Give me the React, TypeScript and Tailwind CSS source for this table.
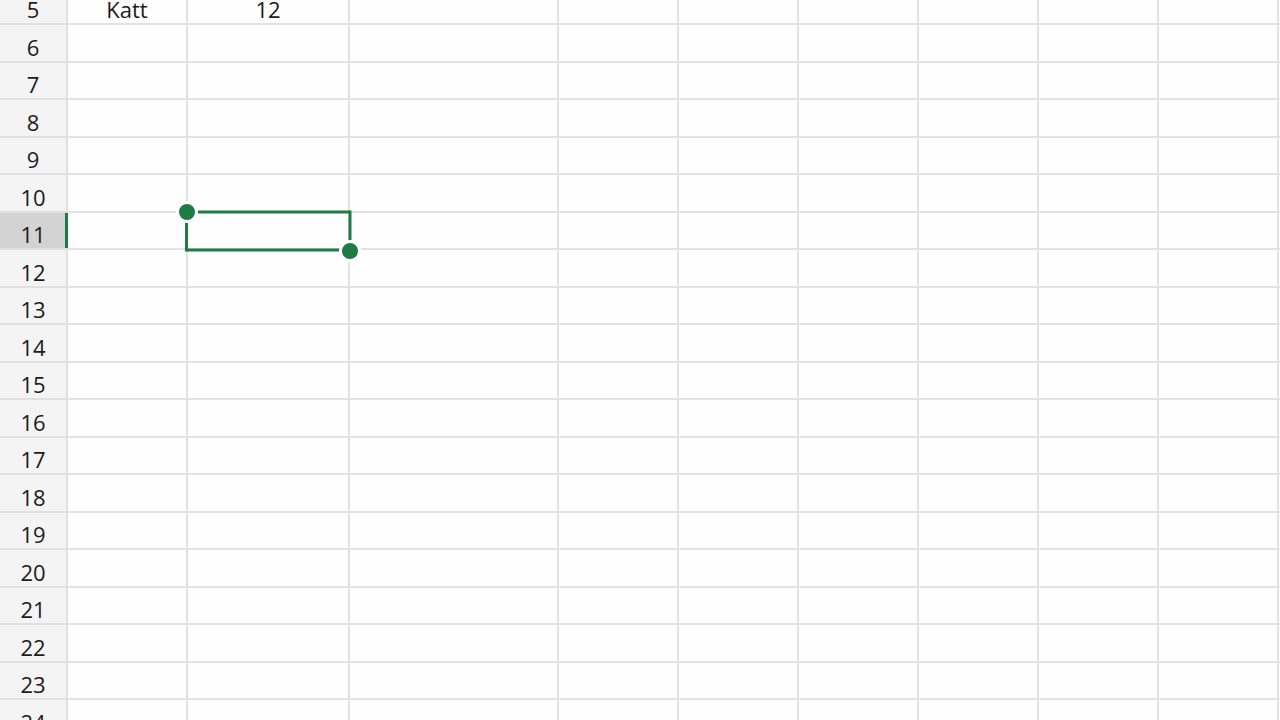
import React from "react";

const rows = Array.from({ length: 20 }, (_, i) => i + 5);
const colWidths = [120, 162, 209, 120, 120, 120, 120, 120, 120, 120];

export default function App() {
  return (
    <div
      className="relative h-[720px] w-[1280px] overflow-hidden bg-[#fefefe] text-[#1c1c1c]"
      style={{ fontFamily: '"Open Sans", "Noto Sans", sans-serif' }}
    >
      <div className="-mt-[12.5px] flex flex-col">
        {rows.map((r) => {
          const sel = r === 11;
          return (
            <div key={r} className="flex h-[37.5px] shrink-0">
              <div
                className={
                  "relative flex w-[68px] shrink-0 items-center justify-center border-b-2 border-r-2 border-[#e0e0e0] pt-[8px] text-[22px] leading-none " +
                  (sel ? "bg-[#d3d3d3]" : "bg-[#f4f4f4]")
                }
              >
                {r}
                {sel && (
                  <div className="absolute -right-[2px] top-0 h-full w-[3px] bg-[#1e7b46]" />
                )}
              </div>
              {colWidths.map((w, ci) => (
                <div
                  key={ci}
                  className="flex shrink-0 items-center justify-center border-b-2 border-r-2 border-[#e2e2e2] pt-[8px] text-[22px] leading-none"
                  style={{ width: w }}
                >
                  {r === 5 && ci === 0 ? "Katt" : r === 5 && ci === 1 ? "12" : ""}
                </div>
              ))}
            </div>
          );
        })}
      </div>
      <svg
        className="pointer-events-none absolute left-0 top-0"
        width="1280"
        height="720"
        viewBox="0 0 1280 720"
      >
        <g stroke="#1e7b46" strokeWidth="3" fill="none">
          <line x1="195" y1="212" x2="350" y2="212" />
          <line x1="350" y1="210.5" x2="350" y2="244" />
          <line x1="186.5" y1="250" x2="343" y2="250" />
          <line x1="186.5" y1="220" x2="186.5" y2="251.5" />
        </g>
        <circle cx="187" cy="212" r="9.5" fill="#1e7b46" stroke="#ffffff" strokeWidth="3" />
        <circle cx="350" cy="251" r="9.5" fill="#1e7b46" stroke="#ffffff" strokeWidth="3" />
      </svg>
    </div>
  );
}
